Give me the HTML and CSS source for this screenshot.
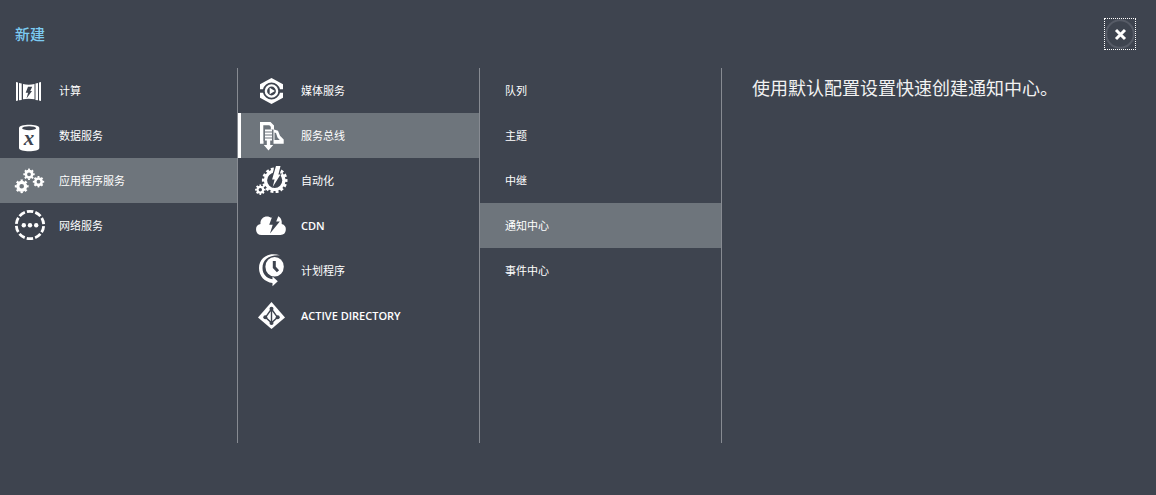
FILE: index.html
```html
<!DOCTYPE html>
<html lang="zh-CN">
<head>
<meta charset="utf-8">
<meta name="viewport" content="width=device-width, initial-scale=1">
<title>新建</title>
<link rel="stylesheet" href="styles.css">
</head>
<body>
<main class="drawer">
  <header class="drawer-header">
    <h1 class="title">新建</h1>
    <button class="close" type="button" aria-label="关闭">
      <svg class="close-icon" viewBox="0 0 30 30" aria-hidden="true">
        <circle cx="15" cy="15" r="13.8" fill="none" stroke="#565b66" stroke-width="2"/>
        <path d="M11 11l9 9M20 11l-9 9" stroke="#fff" stroke-width="3"/>
      </svg>
    </button>
  </header>
  <div class="columns">
    <nav class="column column-first" aria-label="类别">
      <button class="item" type="button">
        <svg class="icon" viewBox="0 0 33 33" aria-hidden="true">
          <path d="M3 8l2 .5v18L3 27zM6 9l2.700.6v16.300L6 26.300zM28 8l-2 .5v18l2 .5zM25 9l-2.500.6v16.300l2.500.4zM10 10q5.700 1.300 11.500 0v15.300q-5.800-1-11.500 0z"/>
          <path class="cut" d="M15 12.800h4.200l-2 4.200h1.800l-5.500 7.500 1.600-5.700h-2.400z"/>
        </svg>
        <span>计算</span>
      </button>
      <button class="item" type="button">
        <svg class="icon" viewBox="0 0 33 33" aria-hidden="true">
          <path d="M6 9C6 4.800 26.300 4.800 26.300 9V29c0 4.300-20.300 4.300-20.300 0z"/>
          <ellipse class="cut" cx="16.100" cy="9.200" rx="7" ry="2"/>
          <text class="cut variable" x="16.100" y="26" text-anchor="middle">x</text>
        </svg>
        <span>数据服务</span>
      </button>
      <button class="item selected" type="button" aria-current="true">
        <svg class="icon" viewBox="0 0 33 33" aria-hidden="true">
          <g class="line">
            <circle cx="16" cy="10.300" r="3.200" stroke-width="2.600"/>
            <circle cx="16" cy="10.300" r="4.800" stroke-width="1.800" pathLength="16" stroke-dasharray="1 1" stroke-dashoffset=".5"/>
            <circle cx="8.700" cy="22.300" r="3.900" stroke-width="3.200"/>
            <circle cx="8.700" cy="22.300" r="5.900" stroke-width="2" pathLength="16" stroke-dasharray="1 1" stroke-dashoffset=".5"/>
            <circle cx="25.500" cy="17.700" r="3.200" stroke-width="2.600"/>
            <circle cx="25.500" cy="17.700" r="4.800" stroke-width="1.800" pathLength="16" stroke-dasharray="1 1" stroke-dashoffset=".5"/>
          </g>
        </svg>
        <span>应用程序服务</span>
      </button>
      <button class="item" type="button">
        <svg class="icon" viewBox="0 0 33 33" aria-hidden="true">
          <circle class="line" cx="17" cy="16" r="13.700" stroke-width="2.800" pathLength="100" stroke-dasharray="7.600 2.400" stroke-dashoffset="-1.300"/>
          <circle cx="10.800" cy="16.300" r="2.200"/><circle cx="17" cy="16.300" r="2.200"/><circle cx="23.200" cy="16.300" r="2.200"/>
        </svg>
        <span>网络服务</span>
      </button>
    </nav>
    <nav class="column column-services" aria-label="服务">
      <button class="item" type="button">
        <svg class="icon" viewBox="0 0 33 33" aria-hidden="true">
          <path d="M5 15.300V10.300L16.500 4 28 10.300V15.300h-3a8.700 8.700 0 0 0-17 0zM5 18.700v5L16.500 30 28 23.700V18.700h-3a8.700 8.700 0 0 1-17 0z"/>
          <circle class="line" cx="16.500" cy="17" r="5.600" stroke-width="2.400"/>
          <path d="M14.700 13.700l5.200 3.300-5.200 3.300z"/>
        </svg>
        <span>媒体服务</span>
      </button>
      <button class="item selected marked" type="button" aria-current="true">
        <svg class="icon" viewBox="0 0 33 33" aria-hidden="true">
          <path d="M5 3h10.500l3.500 3.500v4l4 1.300 2 5 3.700 3.700v4.300H5z"/>
          <path class="cut" d="M8.300 6.300h6l1.500 1.500v2.700h2.700V25h.5v2H8.500v-5h-.200zM19.500 13.500l1.500.5 1.500 4.500 2.300 2.500h-5.300z"/>
          <path d="M10 10.500h7v2h-7zM10 13.500h7v2h-7zM10 16.500h7v2h-7zM10 19.500h7v2h-7zM11.800 21.500h3.400V26h3l-4.700 5.500L8.800 26h3z"/>
        </svg>
        <span>服务总线</span>
      </button>
      <button class="item" type="button">
        <svg class="icon" viewBox="0 0 33 33" aria-hidden="true">
          <g class="line">
            <circle cx="19.700" cy="16.300" r="9.200" stroke-width="3.200"/>
            <circle cx="19.700" cy="16.300" r="11.500" stroke-width="2.600" pathLength="28" stroke-dasharray="1.150 .850" stroke-dashoffset=".5"/>
            <circle cx="5.300" cy="25.700" r="2.800" stroke-width="2.200"/>
            <circle cx="5.300" cy="25.700" r="4.300" stroke-width="1.800" pathLength="16" stroke-dasharray="1 1" stroke-dashoffset=".5"/>
          </g>
          <path class="cut" d="M20 1h7l-2 8.500h2L17 24l1.500-7h-3z"/>
          <path d="M21 2h4.500l-2.100 8.500h2.100l-7.800 12.500 1.900-7.500h-2.500z"/>
        </svg>
        <span>自动化</span>
      </button>
      <button class="item" type="button">
        <svg class="icon" viewBox="0 0 33 33" aria-hidden="true">
          <path d="M6.500 26a5.500 5.500 0 0 1-1-10.900C5 10 8.500 7.500 12 7.500c1.800 0 3 .5 4.200 1.500C19 5 26 6 26.700 12.500v2.500A5.600 5.600 0 0 1 25.500 26z"/>
          <path class="cut" d="M18.200 5h6l-3 7.500h3.600L15 24.500l2.700-8.700h-3.500z"/>
        </svg>
        <span class="latin">CDN</span>
      </button>
      <button class="item" type="button">
        <svg class="icon" viewBox="0 0 33 33" aria-hidden="true">
          <ellipse cx="19.600" cy="12.700" rx="9.200" ry="9.800"/>
          <path d="M25 1.300C14-2.500 4 3.500 4 14c0 8 5.500 14 13.500 15v3.300l5.300-5-5.300-4.800v2.800C11.500 24.500 7.500 20 7.500 14 7.500 5.500 14 .5 25 1.300z"/>
          <path class="hand" d="M19.300 7v6.300l3.700 4"/>
        </svg>
        <span>计划程序</span>
      </button>
      <button class="item" type="button">
        <svg class="icon" viewBox="0 0 33 33" aria-hidden="true">
          <path d="M16.500 3L30 18.500 16.500 30 3 18.500z"/>
          <path class="mesh" d="M16.500 10v14M16.500 10l-6 8.300 6 5.400 6-5.400z"/>
          <g class="cut"><circle cx="16.500" cy="9.800" r="2"/><circle cx="10.300" cy="18.300" r="2"/><circle cx="22.700" cy="18.300" r="2"/><circle cx="16.500" cy="24" r="2"/></g>
        </svg>
        <span class="latin">ACTIVE DIRECTORY</span>
      </button>
    </nav>
    <nav class="column column-types" aria-label="服务总线">
      <button class="item" type="button">队列</button>
      <button class="item" type="button">主题</button>
      <button class="item" type="button">中继</button>
      <button class="item selected" type="button" aria-current="true">通知中心</button>
      <button class="item" type="button">事件中心</button>
    </nav>
    <p class="description">使用默认配置设置快速创建通知中心。</p>
  </div>
</main>
</body>
</html>
```

FILE: styles.css
```css
* {
  box-sizing: border-box;
}

body {
  margin: 0;
  background: #3e444f;
  color: #fff;
  font-family: "Open Sans", "Noto Sans CJK SC", sans-serif;
}

.drawer {
  display: flex;
  flex-direction: column;
  min-height: 100vh;
  padding-bottom: 52px;
}

.drawer-header {
  display: flex;
  align-items: center;
  justify-content: space-between;
  height: 68px;
  padding: 0 20px 0 15px;
}

.title {
  margin: 0;
  color: #7ccbf2;
  font-size: 15px;
  font-weight: 500;
  line-height: 24px;
}

.close {
  display: grid;
  place-items: center;
  width: 32px;
  height: 32px;
  padding: 0;
  border: 1px dotted #fff;
  background: none;
}

.close-icon {
  width: 30px;
  height: 30px;
}

.columns {
  display: flex;
  flex: 1;
}

.column {
  flex: 0 1 242px;
  border-right: 1px solid #878b92;
}

.column-first {
  flex-basis: 238px;
}

.item {
  --surface: #3e444f;
  display: flex;
  align-items: center;
  gap: 13px;
  width: 100%;
  height: 45px;
  padding: 0 13px;
  border: 0;
  background: var(--surface);
  color: #fff;
  font: inherit;
  font-size: 11px;
  line-height: 16px;
  text-align: left;
}

.column-services .item {
  padding-left: 17px;
}

.column-types .item {
  padding-left: 25px;
}

.latin {
  font-weight: 600;
}

.item.selected {
  --surface: #6e757c;
}

.item.marked {
  box-shadow: inset 3px 0 #fff;
}

.icon {
  flex: none;
  width: 33px;
  height: 33px;
  fill: #fff;
}

.cut {
  fill: var(--surface);
}

.line {
  fill: none;
  stroke: #fff;
}

.hand {
  fill: none;
  stroke: var(--surface);
  stroke-width: 3;
}

.mesh {
  fill: none;
  stroke: var(--surface);
  stroke-width: 1.4;
}

.variable {
  font: italic bold 21px "Liberation Serif", serif;
}

.description {
  flex: 1;
  margin: 0;
  padding: 8px 30px;
  color: #f2f2f2;
  font-size: 18px;
  font-weight: 400;
  line-height: 24px;
}
```
